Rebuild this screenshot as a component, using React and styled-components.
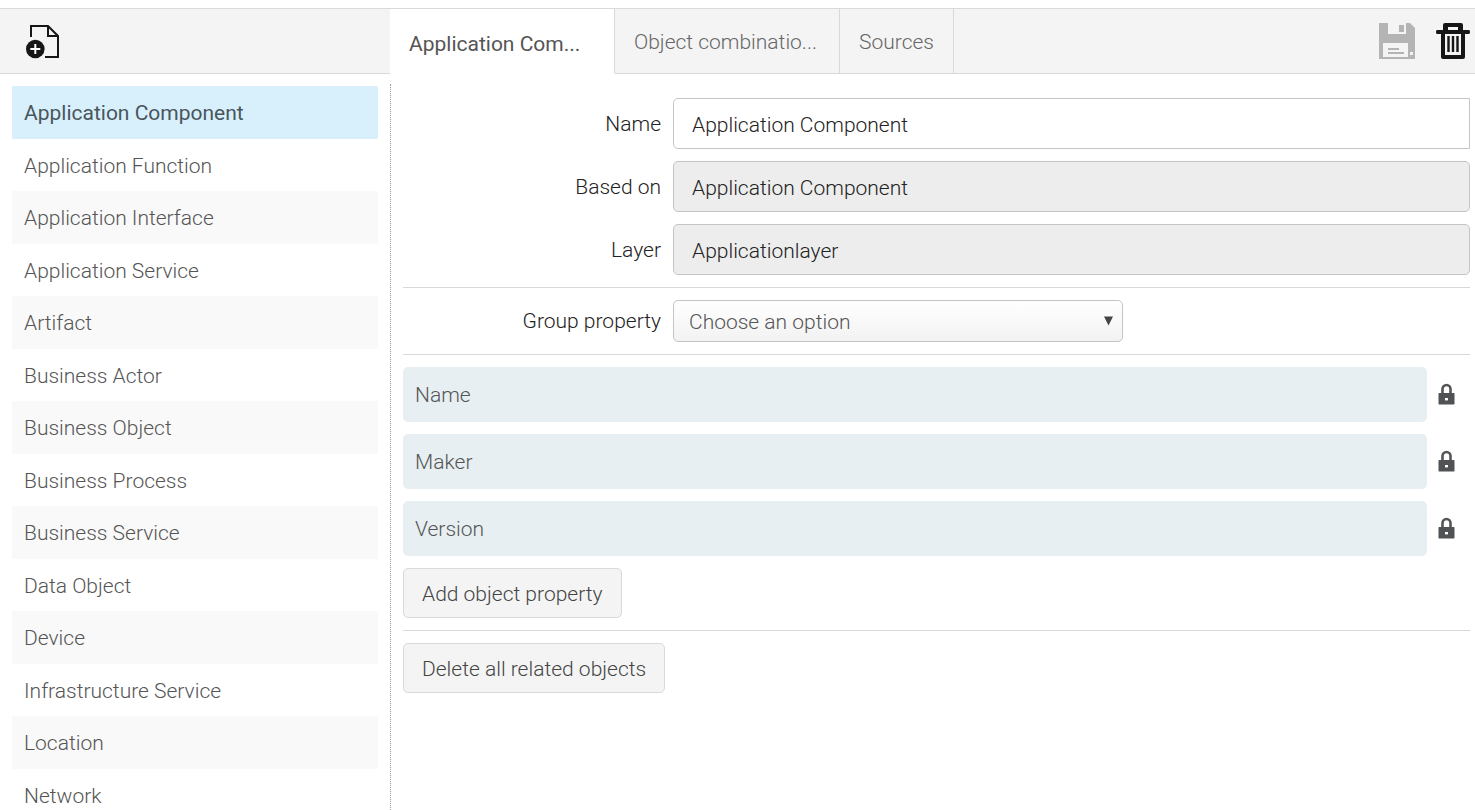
import React, { useState } from 'react';
import styled, { createGlobalStyle, css } from 'styled-components';

const GlobalStyle = createGlobalStyle`
  *, *::before, *::after { box-sizing: border-box; }
  body {
    margin: 0;
    background: #fff;
    color: #222;
    font-family: Roboto, "Liberation Sans", sans-serif;
    font-size: 21px;
    font-weight: 300;
    line-height: 24px;
  }
  button, input, select { font: inherit; color: inherit; margin: 0; }
`;

const Shell = styled.div`
  display: flex;
  flex-direction: column;
  height: 100vh;
  padding-top: 8px;
  overflow: hidden;
`;

const TopBar = styled.header`
  display: flex;
  flex: none;
  height: 66px;
  border-top: 1px solid #d9d9d9;
`;

const SidebarTools = styled.div`
  display: flex;
  align-items: center;
  flex: none;
  width: 390px;
  padding: 2px 0 0 24px;
  background: #f4f4f4;
  border-bottom: 1px solid #d9d9d9;
`;

const IconButton = styled.button`
  display: flex;
  padding: 0;
  border: 0;
  background: none;
  cursor: pointer;

  &:disabled { cursor: default; }
`;

const Tabs = styled.nav`
  display: flex;
  flex: none;
`;

const Tab = styled.button`
  padding: 2px 19px 0;
  border: 0;
  border-right: 1px solid #d9d9d9;
  border-bottom: 1px solid #d9d9d9;
  background: #f4f4f4;
  color: #666;
  text-align: left;
  white-space: nowrap;
  cursor: pointer;

  ${({ $active }) => $active && css`
    padding-top: 6px;
    border-bottom-color: transparent;
    background: #fff;
    color: #555;
    font-weight: 400;
  `}
`;

const TabLabel = styled.span`
  display: block;
  min-width: ${({ $wide }) => ($wide ? '186px' : '0')};
`;

const Actions = styled.div`
  display: flex;
  flex: 1;
  align-items: center;
  justify-content: flex-end;
  gap: 20px;
  padding-right: 5px;
  background: #f4f4f4;
  border-bottom: 1px solid #d9d9d9;
`;

const Body = styled.div`
  display: flex;
  flex: 1;
  min-height: 0;
  padding-top: 10px;
`;

const Sidebar = styled.aside`
  flex: none;
  width: 391px;
  padding: 2px 12px 0;
  border-right: 1px dotted #999;
  overflow-y: auto;
  scrollbar-width: none;
`;

const ObjectList = styled.ul`
  margin: 0;
  padding: 0;
  list-style: none;
`;

const ObjectButton = styled.button`
  display: block;
  width: 100%;
  height: 100%;
  padding: 0 12px;
  border: 0;
  border-radius: 2px;
  background: ${({ $active }) => ($active ? '#d8f0fc' : 'transparent')};
  color: ${({ $active }) => ($active ? '#49565c' : '#555')};
  font-weight: ${({ $active }) => ($active ? 400 : 300)};
  text-align: left;
  cursor: pointer;
`;

const ObjectItem = styled.li`
  height: 52px;

  &:nth-child(odd) {
    height: 53px;
    background: #f9f9f9;
  }

  &:nth-child(even) ${ObjectButton} {
    padding-top: 2px;
  }
`;

const Main = styled.main`
  flex: 1;
  min-width: 0;
  padding: 14px 5px 24px 12px;
  overflow-y: auto;
  scrollbar-width: none;
`;

const Section = styled.section`
  display: flex;
  flex-direction: column;
  align-items: stretch;
  gap: 12px;
  padding-bottom: 12px;

  & + & {
    padding-top: 12px;
    border-top: 1px solid #d9d9d9;
  }
`;

const Field = styled.div`
  display: grid;
  grid-template-columns: 258px minmax(0, 1fr);
  column-gap: 12px;
  align-items: center;
`;

const FieldLabel = styled.label`
  text-align: right;
`;

const TextInput = styled.input`
  width: 100%;
  height: 51px;
  padding: 2px 18px 0;
  border: 1px solid #c4c4c4;
  border-radius: 5px 0 0 5px;
  background: #fff;
  outline: 0;

  &:read-only {
    border-radius: 5px;
    background: #ededed;
  }
`;

const SelectBox = styled.div`
  position: relative;
  width: 450px;
  max-width: 100%;
`;

const Select = styled.select`
  display: block;
  width: 100%;
  height: 42px;
  padding: 2px 32px 0 15px;
  border: 1px solid #c4c4c4;
  border-radius: 5px;
  background: linear-gradient(#fff, #f2f2f2);
  color: #555;
  appearance: none;
`;

const Arrow = styled.svg`
  position: absolute;
  top: 16px;
  right: 10px;
  pointer-events: none;
`;

const Property = styled.div`
  display: flex;
  align-items: center;
  gap: 11px;
  padding-right: 15px;
`;

const PropertyName = styled.div`
  display: flex;
  align-items: center;
  flex: 1;
  height: 55px;
  padding: 0 12px;
  border-radius: 5px;
  background: #e7eff3;
  color: #555;
`;

const Button = styled.button`
  align-self: flex-start;
  height: 50px;
  padding: 2px 18px 0;
  border: 1px solid #d9d9d9;
  border-radius: 5px;
  background: #f4f4f4;
  color: #444;
  cursor: pointer;
`;

const AddPageIcon = () => (
  <svg width="38" height="36" viewBox="0 0 38 36" fill="none" aria-hidden="true">
    <path d="M7 13V2H24L34 12V33H21" stroke="#161616" strokeWidth="2" />
    <path d="M24 2V12H34" stroke="#161616" strokeWidth="2" />
    <circle cx="11.300" cy="25" r="9.300" fill="#161616" />
    <path d="M11.300 20v10M6.300 25h10" stroke="#fff" strokeWidth="2" />
  </svg>
);

const SaveIcon = () => (
  <svg width="38" height="38" viewBox="0 0 38 38" aria-hidden="true">
    <path
      fill="#b4b4b4"
      fillRule="evenodd"
      d="M1 1H10V12H28V1H32L37 6V37H1ZM5 21V35H30V21ZM32 30V33H35V30Z"
    />
    <path fill="#b4b4b4" d="M21 3h5v7h-5zM10 26h11v2H10zM10 30h16v2H10z" />
  </svg>
);

const TrashIcon = () => (
  <svg width="34" height="38" viewBox="0 0 34 38" aria-hidden="true">
    <path
      fill="#161616"
      fillRule="evenodd"
      d="M9 1H25Q27 1 27 3V8H33Q34 8 34 10Q34 12 33 12H29V35Q29 37 27 37H7Q5 37 5 35V12H1Q0 12 0 10Q0 8 1 8H7V3Q7 1 9 1ZM12 5V8H22V5ZM9 12V33H25V12Z"
    />
    <path stroke="#161616" strokeWidth="2.400" d="M12.500 14v16M17 14v16M21.500 14v16" />
  </svg>
);

const LockIcon = () => (
  <svg width="17" height="24" viewBox="0 0 17 24" role="img" aria-label="Locked">
    <path d="M4.500 11V6a4 4 0 0 1 8 0v5" fill="none" stroke="#555" strokeWidth="2.600" />
    <rect x="0.500" y="10" width="16" height="11.500" rx="0.700" fill="#505254" />
    <rect x="7" y="15" width="3" height="2.400" fill="#fff" />
  </svg>
);

const objects = [
  'Application Component',
  'Application Function',
  'Application Interface',
  'Application Service',
  'Artifact',
  'Business Actor',
  'Business Object',
  'Business Process',
  'Business Service',
  'Data Object',
  'Device',
  'Infrastructure Service',
  'Location',
  'Network',
];

const tabs = [
  { label: 'Application Com...', wide: true },
  { label: 'Object combinatio...', wide: true },
  { label: 'Sources' },
];

const properties = ['Name', 'Maker', 'Version'];

export default function App() {
  const [selected, setSelected] = useState(objects[0]);
  const [tab, setTab] = useState(0);
  const [name, setName] = useState('Application Component');

  return (
    <Shell>
      <GlobalStyle />
      <TopBar>
        <SidebarTools>
          <IconButton type="button" aria-label="Add object"><AddPageIcon /></IconButton>
        </SidebarTools>
        <Tabs>
          {tabs.map(({ label, wide }, i) => (
            <Tab key={label} type="button" $active={i === tab} onClick={() => setTab(i)}>
              <TabLabel $wide={wide}>{label}</TabLabel>
            </Tab>
          ))}
        </Tabs>
        <Actions>
          <IconButton type="button" aria-label="Save" disabled><SaveIcon /></IconButton>
          <IconButton type="button" aria-label="Delete"><TrashIcon /></IconButton>
        </Actions>
      </TopBar>
      <Body>
        <Sidebar>
          <ObjectList>
            {objects.map((item) => (
              <ObjectItem key={item}>
                <ObjectButton type="button" $active={item === selected} onClick={() => setSelected(item)}>
                  {item}
                </ObjectButton>
              </ObjectItem>
            ))}
          </ObjectList>
        </Sidebar>
        <Main>
          <Section>
            <Field>
              <FieldLabel htmlFor="name">Name</FieldLabel>
              <TextInput id="name" value={name} onChange={(e) => setName(e.target.value)} />
            </Field>
            <Field>
              <FieldLabel htmlFor="based-on">Based on</FieldLabel>
              <TextInput id="based-on" value="Application Component" readOnly />
            </Field>
            <Field>
              <FieldLabel htmlFor="layer">Layer</FieldLabel>
              <TextInput id="layer" value="Applicationlayer" readOnly />
            </Field>
          </Section>
          <Section>
            <Field>
              <FieldLabel htmlFor="group">Group property</FieldLabel>
              <SelectBox>
                <Select id="group" defaultValue="">
                  <option value="">Choose an option</option>
                </Select>
                <Arrow width="9" height="10" viewBox="0 0 9 10" aria-hidden="true">
                  <path d="M0 0.500H9L4.500 9.500Z" fill="#444" />
                </Arrow>
              </SelectBox>
            </Field>
          </Section>
          <Section>
            {properties.map((property) => (
              <Property key={property}>
                <PropertyName>{property}</PropertyName>
                <LockIcon />
              </Property>
            ))}
            <Button type="button">Add object property</Button>
          </Section>
          <Section>
            <Button type="button">Delete all related objects</Button>
          </Section>
        </Main>
      </Body>
    </Shell>
  );
}
